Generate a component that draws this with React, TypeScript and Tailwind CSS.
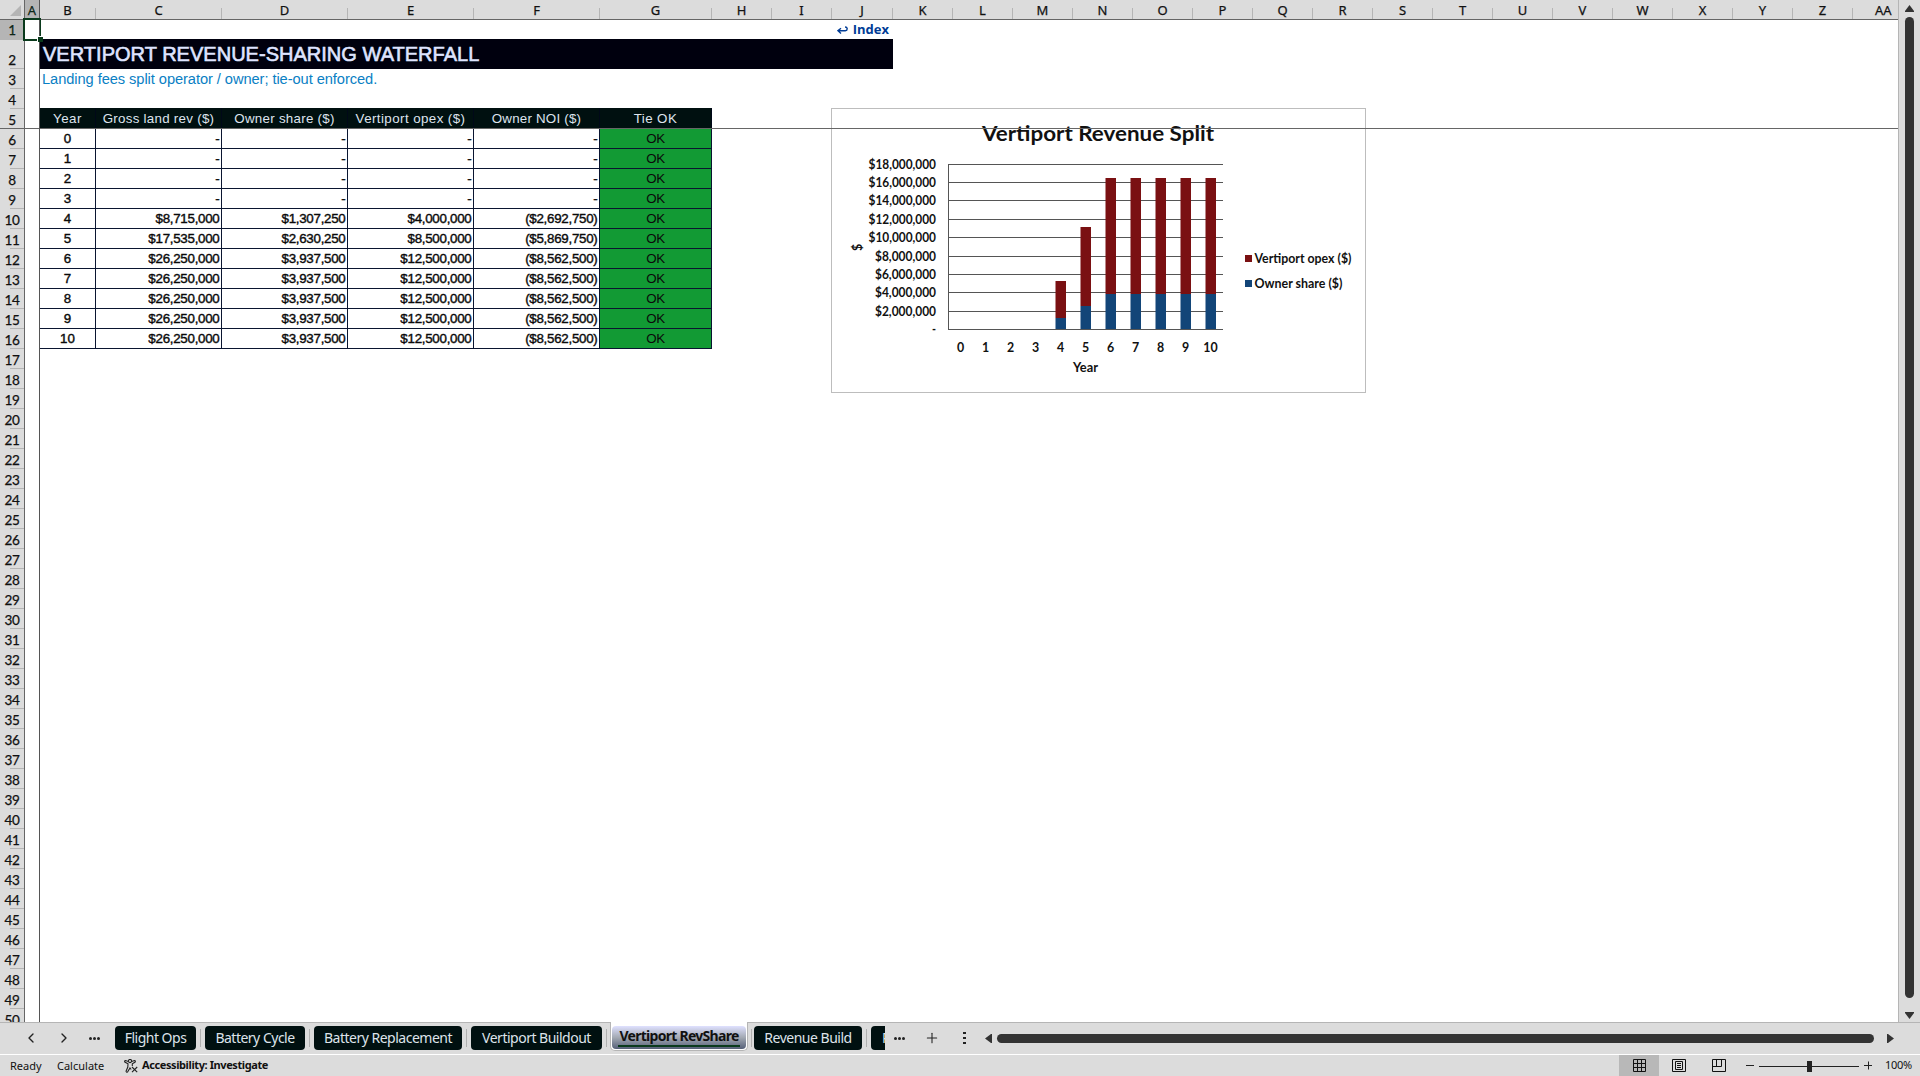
import { ChevronLeft, ChevronRight, Plus } from "lucide-react";

const COLUMNS = [
  { id: "B", w: "w-[56px]" },
  { id: "C", w: "w-[126px]" },
  { id: "D", w: "w-[126px]" },
  { id: "E", w: "w-[126px]" },
  { id: "F", w: "w-[126px]" },
  { id: "G", w: "w-[112px]" },
  { id: "H", w: "w-[60px]" },
  { id: "I", w: "w-[60px]" },
  { id: "J", w: "w-[61px]" },
  ..."KLMNOPQRSTUVWXYZ".split("").map(id => ({ id, w: "w-[60px]" })),
];

const ROW_NUMBERS = Array.from({ length: 50 }, (_, i) => i + 1);

const HEADERS = [
  { label: "Year",               w: "w-[56px]",  track: "tracking-[0.5px]" },
  { label: "Gross land rev ($)", w: "w-[126px]", track: "tracking-[0.28px]" },
  { label: "Owner share ($)",    w: "w-[126px]", track: "tracking-[0.28px]" },
  { label: "Vertiport opex ($)", w: "w-[126px]", track: "tracking-[0.42px]" },
  { label: "Owner NOI ($)",      w: "w-[126px]", track: "tracking-[0.22px]" },
  { label: "Tie OK",             w: "w-[112px]", track: "tracking-[0.4px]" },
];

const FULL = ["$26,250,000", "$3,937,500", "$12,500,000", "($8,562,500)"];
const EMPTY = ["-", "-", "-", "-"];

const ROWS = [
  { year: 0,  values: EMPTY },
  { year: 1,  values: EMPTY },
  { year: 2,  values: EMPTY },
  { year: 3,  values: EMPTY },
  { year: 4,  values: ["$8,715,000", "$1,307,250", "$4,000,000", "($2,692,750)"] },
  { year: 5,  values: ["$17,535,000", "$2,630,250", "$8,500,000", "($5,869,750)"] },
  { year: 6,  values: FULL },
  { year: 7,  values: FULL },
  { year: 8,  values: FULL },
  { year: 9,  values: FULL },
  { year: 10, values: FULL },
];

const Y_AXIS = [
  { label: "$18,000,000", y: 164.5, w: 67.5 },
  { label: "$16,000,000", y: 182.5, w: 67.5 },
  { label: "$14,000,000", y: 200.5, w: 67.5 },
  { label: "$12,000,000", y: 219.5, w: 67.5 },
  { label: "$10,000,000", y: 237.5, w: 67.5 },
  { label: "$8,000,000",  y: 256.5, w: 61 },
  { label: "$6,000,000",  y: 274.5, w: 61 },
  { label: "$4,000,000",  y: 292.5, w: 61 },
  { label: "$2,000,000",  y: 311.5, w: 61 },
  { label: "-",           y: 329.5, w: 4 },
];

const BARS = [
  { year: 4,  top: 281, split: 318 },
  { year: 5,  top: 227, split: 306 },
  { year: 6,  top: 178, split: 294 },
  { year: 7,  top: 178, split: 294 },
  { year: 8,  top: 178, split: 294 },
  { year: 9,  top: 178, split: 294 },
  { year: 10, top: 178, split: 294 },
];

function ColumnHeader() {
  return (
    <div className="flex h-5 shrink-0 border-b border-[#666] bg-[#dcdcdc] font-['Noto_Sans'] text-[13px] leading-[21px] text-[#111] [-webkit-text-stroke:0.25px_#111]">
      <div className="flex w-6 shrink-0 items-end justify-end pr-[3px] pb-[3px]">
        <svg width="11" height="11"><path d="M11 0V11H0Z" fill="#b5b5b5" /></svg>
      </div>
      <div className="w-4 shrink-0 border-x border-[#666] bg-[#b5b5b5] text-center text-[#0b2e18]">A</div>
      {COLUMNS.map(c => (
        <div key={c.id} className={`flex shrink-0 items-end justify-end ${c.w}`}>
          <span className="flex-1 self-start text-center">{c.id}</span>
          <span className="h-[11px] w-px bg-[#b5b5b5]" />
        </div>
      ))}
      <div className="w-[45px] shrink-0 overflow-hidden pl-[22px]">AA</div>
    </div>
  );
}

function RowHeader() {
  return (
    <div className="w-[25px] shrink-0 border-r border-[#666] bg-[#dcdcdc] font-['Lato'] text-[13.5px] text-[#111] [-webkit-text-stroke:0.25px_#111]">
      {ROW_NUMBERS.map(n => (
        <div
          key={n}
          className={`flex flex-col items-end justify-end ${
            n === 1 ? "h-5 bg-[#b5b5b5] text-[#0b2e18]" : n === 2 ? "h-[29px]" : "h-5"
          }`}
        >
          <span className={`w-full text-center tracking-[-0.3px] ${n === 1 ? "leading-[17px]" : "leading-[15px]"}`}>{n}</span>
          <span className={`h-px bg-[#b5b5b5] ${n === 1 ? "w-full" : "w-[14px]"}`} />
        </div>
      ))}
    </div>
  );
}

function DataTable() {
  return (
    <div className="ml-[15px] w-[672px] font-['Liberation_Sans'] text-[13.33px]">
      <div className="flex h-[21px] bg-[#001010] text-[#dfe4ee]">
        {HEADERS.map(h => (
          <div key={h.label} className={`border-r border-[#000818] text-center leading-[21px] ${h.w} ${h.track}`}>{h.label}</div>
        ))}
      </div>
      {ROWS.map(r => (
        <div key={r.year} className="flex h-5 text-[#0a0a0a] [-webkit-text-stroke:0.4px_#0a0a0a]">
          <div className="w-[56px] border-r border-b border-[#0a1530] text-center leading-[20px]">{r.year}</div>
          {r.values.map((v, i) => (
            <div key={i} className="w-[126px] border-r border-b border-[#0a1530] pr-[1.5px] text-right leading-[20px] tracking-[-0.27px]">{v}</div>
          ))}
          <div className="w-[112px] border-r border-b border-[#0a1530] bg-[#129a34] text-center leading-[20px] tracking-[-0.3px] [-webkit-text-stroke:0px]">OK</div>
        </div>
      ))}
    </div>
  );
}

function RevenueChart() {
  return (
    <svg
      className="absolute top-[108px] left-[831px] font-['Lato'] font-bold [-webkit-text-stroke:0.35px_#111]"
      width="535"
      height="285"
      viewBox="831 108 535 285"
      fill="#111"
    >
      <rect x="831.5" y="108.5" width="534" height="284" fill="#fff" stroke="#bdbdbd" />
      <text x="982" y="141" fontSize="20" textLength="232" lengthAdjust="spacingAndGlyphs">Vertiport Revenue Split</text>
      {Y_AXIS.map(t => (
        <g key={t.label}>
          <path d={`M948 ${t.y}H1223`} stroke="#555" />
          <text x={936 - t.w} y={t.y + 4.2} fontSize="12.4" textLength={t.w} lengthAdjust="spacingAndGlyphs">{t.label}</text>
        </g>
      ))}
      <path d="M948.5 164V330" stroke="#555" />
      {BARS.map(b => (
        <g key={b.year}>
          <rect x={955.5 + b.year * 25} y={b.top} width="10.5" height={b.split - b.top} fill="#7a1012" />
          <rect x={955.5 + b.year * 25} y={b.split} width="10.5" height={329 - b.split} fill="#124578" />
        </g>
      ))}
      {ROWS.map(r => (
        <text key={r.year} x={960.5 + r.year * 25} y="352" fontSize="12.4" textAnchor="middle">{r.year}</text>
      ))}
      <text x="1073" y="371.5" fontSize="12.4" textLength="25" lengthAdjust="spacingAndGlyphs">Year</text>
      <text transform="translate(862 251) rotate(-90)" fontSize="12.4">$</text>
      <rect x="1245" y="255" width="7" height="7" fill="#7a1012" />
      <text x="1254.5" y="262.5" fontSize="12.6" textLength="97" lengthAdjust="spacingAndGlyphs">Vertiport opex ($)</text>
      <rect x="1245" y="280" width="7" height="7" fill="#124578" />
      <text x="1254.5" y="287.5" fontSize="12.6" textLength="88" lengthAdjust="spacingAndGlyphs">Owner share ($)</text>
    </svg>
  );
}

function Selection() {
  return (
    <div className="absolute top-[18px] left-[23px] h-[23px] w-[18px] border-2 border-r border-[#0a3a1c]">
      <div className="absolute -right-[3px] -bottom-[3px] h-[6px] w-[6px] border-t border-l border-white bg-[#0a3a1c]" />
    </div>
  );
}

function VerticalScroll() {
  return (
    <div className="flex w-[22px] shrink-0 flex-col items-center border-l border-[#b5b5b5] bg-[#dcdcdc] pt-[5px] pr-px">
      <svg width="9" height="7"><path d="M4.5 0L9 6V7H0V6Z" fill="#333" /></svg>
      <div className="mt-[5px] h-[981px] w-[9px] rounded-full bg-[#333]" />
      <svg className="mt-3.5" width="9" height="7"><path d="M0 0H9V1L4.5 7L0 1Z" fill="#333" /></svg>
    </div>
  );
}

const TAB = "h-6 shrink-0 rounded-[4px] bg-[#001010] text-center leading-[23px] text-[#dde3ea]";

function Divider({ gap }: { gap: string }) {
  return <span className={`h-[18px] w-px shrink-0 bg-[#b0b0b0] ${gap}`} />;
}

function TabBar() {
  return (
    <div className="flex h-8 shrink-0 items-center border-t border-[#b5b5b5] bg-[#dcdcdc] pb-px font-['Noto_Sans'] text-[14px] tracking-[-0.5px]">
      <ChevronLeft className="ml-[23px] h-4 w-4 text-[#222]" />
      <ChevronRight className="ml-[17px] h-4 w-4 text-[#222]" />
      <svg className="ml-[17px]" width="11" height="3" fill="#222">
        <circle cx="1.5" cy="1.5" r="1.5" /><circle cx="5.5" cy="1.5" r="1.5" /><circle cx="9.5" cy="1.5" r="1.5" />
      </svg>
      <div className="-my-px ml-[15px] flex h-8 w-[770px] shrink-0 items-center overflow-hidden">
        <div className={`${TAB} w-[81px]`}>Flight Ops</div>
        <Divider gap="mx-1" />
        <div className={`${TAB} w-[100px]`}>Battery Cycle</div>
        <Divider gap="mx-1" />
        <div className={`${TAB} w-[148px]`}>Battery Replacement</div>
        <Divider gap="mx-1" />
        <div className={`${TAB} w-[131px]`}>Vertiport Buildout</div>
        <Divider gap="ml-1 mr-[3px]" />
        {/* active sheet opens into the grid above it */}
        <div className="h-[29px] w-[138px] shrink-0 self-start rounded-b-[5px] border-x border-b border-[#b5b5b5] bg-white px-px pt-1 pb-px">
          <div className="h-[23px] rounded-[4px] bg-linear-to-b from-[#dfe1ff] via-[#a3a9b3] to-[#566078] px-[6px] text-center font-bold tracking-[-0.72px] whitespace-nowrap text-[#111]">
            <div className="h-[21px] border-b-2 border-[#0a3a1c] leading-[19px]">Vertiport RevShare</div>
          </div>
        </div>
        <Divider gap="mx-[3px]" />
        <div className={`${TAB} -ml-px w-[108px]`}>Revenue Build</div>
        <Divider gap="mx-1" />
        <div className={`${TAB} w-[60px] pl-[11px] text-left`}>Ridership</div>
      </div>
      <svg className="ml-[9px]" width="11" height="3" fill="#222">
        <circle cx="1.5" cy="1.5" r="1.5" /><circle cx="5.5" cy="1.5" r="1.5" /><circle cx="9.5" cy="1.5" r="1.5" />
      </svg>
      <Plus className="ml-[19px] h-4 w-4 text-[#222]" strokeWidth={1.6} />
      <svg className="ml-[23px]" width="3" height="12" fill="#222">
        <rect width="3" height="2" /><rect y="5" width="3" height="2" /><rect y="10" width="3" height="2" />
      </svg>
      <svg className="ml-[19px]" width="7" height="9"><path d="M7 0V9H6L0 4.5L6 0Z" fill="#333" /></svg>
      <div className="ml-[5px] h-[9px] w-[877px] rounded-full bg-[#333]" />
      <svg className="ml-[13px]" width="7" height="9"><path d="M0 0V9H1L7 4.5L1 0Z" fill="#333" /></svg>
    </div>
  );
}

function StatusBar() {
  return (
    <div className="flex h-[22px] shrink-0 items-center border-t border-white bg-[#dcdcdc] font-['Noto_Sans'] text-[11px] text-[#111]">
      <span className="ml-2.5 w-[47px] pt-px">Ready</span>
      <span className="w-[67px] pt-px">Calculate</span>
      <svg width="14" height="14" viewBox="0 0 14 14" fill="none" stroke="#222" strokeWidth="1.1">
        <circle cx="6" cy="2" r="1.6" />
        <path d="M4.3 2.6L1.5 1.6Q.2 1.8.8 3L4 4.8L3.8 8L2 12.2Q2.4 13.8 3.6 12.8L6 9L7.2 10.5" />
        <path d="M7.7 2.6L10.5 1.6Q11.8 1.8 11.2 3L8.3 4.8V7" />
        <path d="M8 8L13.2 13.2M13.2 8L8 13.2" />
      </svg>
      <span className="ml-1 font-bold tracking-[-0.4px]">Accessibility: Investigate</span>
      <div className="ml-auto flex h-full items-center">
        <div className="flex h-full w-10 items-center justify-center bg-[#b8b8b8]">
          <svg width="13" height="13" fill="none" stroke="#111"><path d="M.5.5H12.5V12.5H.5ZM4.5.5V12.5M8.5.5V12.5M.5 4.5H12.5M.5 8.5H12.5" /></svg>
        </div>
        <div className="flex w-10 justify-center">
          <svg width="14" height="13" fill="none" stroke="#111"><path d="M.5.5H13.5V12.5H.5ZM3.5 2.5H10.5V10.5H3.5ZM5 4.5H9M5 6.5H9M5 8.5H9" /></svg>
        </div>
        <div className="flex w-10 justify-center">
          <svg width="14" height="13" fill="none" stroke="#111"><path d="M.5.5H13.5V12.5H.5ZM.5 7.5H9.5M4.5.5V7.5M9.5.5V7.5" /></svg>
        </div>
        <svg className="ml-px" width="132" height="13" fill="none" stroke="#222">
          <path d="M6 6.5H14M19 7.5H119M124 6.5H132M128.5 2.5V10.5" />
          <rect x="67" y="2" width="5" height="11" fill="#222" stroke="none" />
        </svg>
        <span className="mr-2 ml-[13px] w-[27px] tracking-[-0.3px]">100%</span>
      </div>
    </div>
  );
}

export default function App() {
  return (
    <div className="flex h-[1076px] w-[1920px] flex-col overflow-hidden bg-[#dcdcdc]">
      <div className="flex h-[1022px] shrink-0">
        <div className="relative flex h-full w-[1898px] shrink-0 flex-col overflow-hidden bg-white">
          <ColumnHeader />
          <div className="flex">
            <RowHeader />
            <div className="flex-1">
              <div className="flex h-[19px] w-[866px] items-center justify-end gap-[5px] pr-0.5 font-['Open_Sans'] text-[13px] font-bold text-[#003c96]">
                <svg width="11" height="8" fill="none" stroke="#003c96" strokeWidth="1.4"><path d="M4 2.2L1 4.7L4 7.4M1 4.7H8.3Q10.2 4.5 10.2 2.7Q10 1 8 1" /></svg>
                Index
              </div>
              <div className="ml-[15px] h-[30px] w-[853px] bg-[#00000e] pl-[3px] font-['Liberation_Sans'] text-[20px] leading-[30px] tracking-[0.02px] text-[#dfe4ff] [-webkit-text-stroke:0.6px_#dfe4ff]">
                VERTIPORT REVENUE-SHARING WATERFALL
              </div>
              <div className="mb-[19px] ml-[17px] h-5 font-['Liberation_Sans'] text-[14.67px] leading-[20px] tracking-[-0.07px] text-[#0a80c4]">
                Landing fees split operator / owner; tie-out enforced.
              </div>
              <DataTable />
            </div>
          </div>
          <RevenueChart />
          {/* frozen pane edges */}
          <div className="absolute top-[128px] left-0 h-px w-full bg-[#666]" />
          <div className="absolute top-0 left-[39px] h-full w-px bg-[#555]" />
          <Selection />
        </div>
        <VerticalScroll />
      </div>
      <TabBar />
      <StatusBar />
    </div>
  );
}
